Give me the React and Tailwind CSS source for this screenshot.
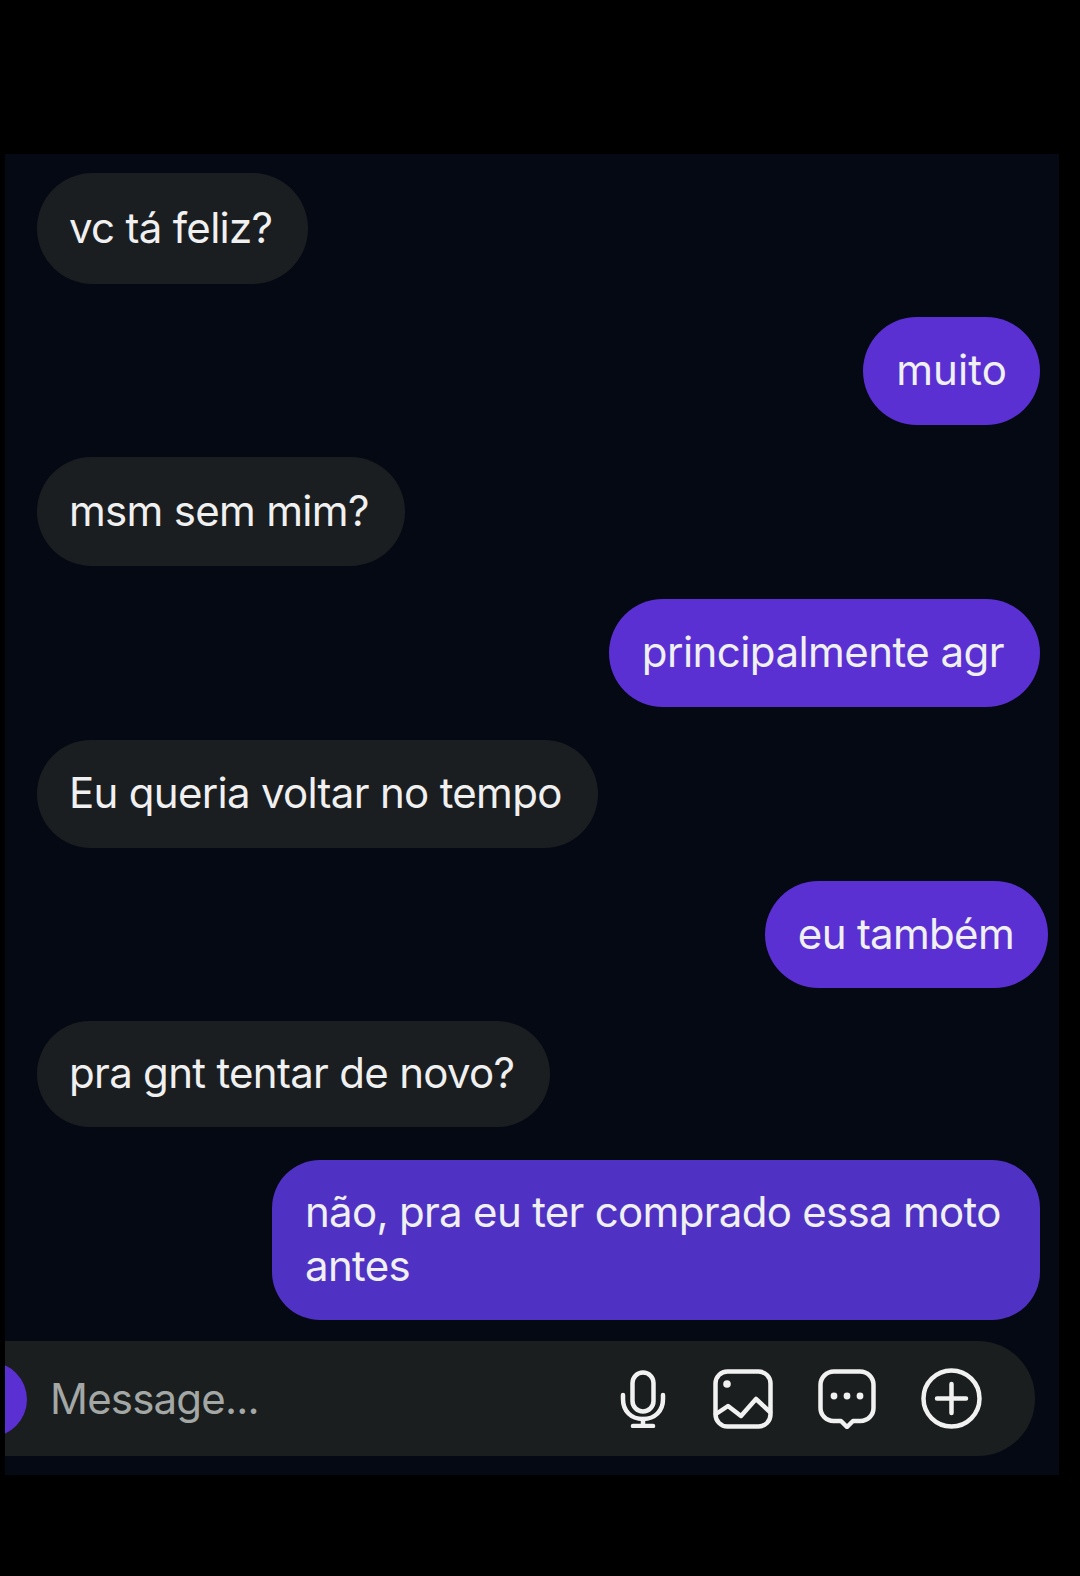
import React from 'react';

const messages = [
  { text: 'vc tá feliz?', mine: false, height: 'h-[111px]', top: 'mt-[19px]' },
  { text: 'muito', mine: true, height: 'h-[108px]', top: 'mt-[33px]', extra: 'tracking-[0.1px]' },
  { text: 'msm sem mim?', mine: false, height: 'h-[109px]', top: 'mt-[32px]' },
  { text: 'principalmente agr', mine: true, height: 'h-[108px]', top: 'mt-[33px]', extra: 'pr-[36px] tracking-[-0.55px]' },
  { text: 'Eu queria voltar no tempo', mine: false, height: 'h-[108px]', top: 'mt-[33px]' },
  { text: 'eu também', mine: true, height: 'h-[107px]', top: 'mt-[33px]', extra: '-mr-[8px] pr-[34px]' },
  { text: 'pra gnt tentar de novo?', mine: false, height: 'h-[106px]', top: 'mt-[33px]' },
];

const MicIcon = () => (
  <svg width="46" height="58" viewBox="0 0 46 58" fill="none" stroke="#f1f1f1" strokeWidth="4.5" strokeLinecap="round" strokeLinejoin="round">
    <rect x="12.5" y="2.5" width="21" height="39" rx="10.5" />
    <path d="M3 25v4c0 12 8 20 20 20s20-8 20-20v-4" />
    <path d="M23 49v7" />
    <path d="M13 56h20" />
  </svg>
);

const ImageIcon = () => (
  <svg width="60" height="60" viewBox="0 0 60 60" fill="none" stroke="#f1f1f1" strokeWidth="4.5" strokeLinecap="round" strokeLinejoin="round">
    <rect x="2.5" y="2.5" width="55" height="55" rx="12" />
    <circle cx="14" cy="15" r="3.8" fill="#f1f1f1" stroke="none" />
    <path d="M3 45l12-8 13 10 15-17 14 13" />
  </svg>
);

const ChatIcon = () => (
  <svg width="58" height="60" viewBox="0 0 58 60" fill="none" stroke="#f1f1f1" strokeWidth="4.5" strokeLinecap="round" strokeLinejoin="round">
    <path d="M16 2.5h26a13.5 13.5 0 0 1 13.5 13.5v23a13 13 0 0 1-13 13h-7.5l-6 6-6-6h-7.5a13 13 0 0 1-13-13V16A13.5 13.5 0 0 1 16 2.5z" />
    <circle cx="16" cy="27" r="3.4" fill="#f1f1f1" stroke="none" />
    <circle cx="29" cy="27" r="3.4" fill="#f1f1f1" stroke="none" />
    <circle cx="42" cy="27" r="3.4" fill="#f1f1f1" stroke="none" />
  </svg>
);

const PlusIcon = () => (
  <svg width="61" height="61" viewBox="0 0 61 61" fill="none" stroke="#f1f1f1" strokeWidth="4.5" strokeLinecap="round">
    <circle cx="30.5" cy="30.5" r="28" />
    <path d="M30.5 16v29M16 30.5h29" />
  </svg>
);

const Bubble = ({ text, mine, height, top, extra = '' }) => (
  <div
    className={`${top} ${height} flex items-center rounded-full pb-[3px] text-[42px] tracking-[-0.7px] text-[#f0f0f0] ${
      mine ? 'self-end bg-[#5a30d2] pl-[33px] pr-[33px]' : 'self-start bg-[#1b1e21] pl-[32px] pr-[36px]'
    } ${extra}`}
  >
    {text}
  </div>
);

export default function App() {
  return (
    <div className="h-[1576px] w-[1080px] overflow-hidden bg-black pt-[154px] pl-[5px] font-['Inter',sans-serif]">
      <div className="flex h-[1321px] w-[1054px] flex-col bg-[#050913] pl-[32px] pr-[19px]">
        {messages.map((m) => (
          <Bubble key={m.text} {...m} />
        ))}
        <div className="mt-[33px] flex h-[160px] w-[768px] items-center self-end rounded-[48px] bg-[#4f32c4] pb-[3px] px-[33px] text-[42px] leading-[54px] tracking-[-0.7px] text-[#f0f0f0]">
          não, pra eu ter comprado essa moto antes
        </div>
        <div className="relative mt-[21px] -ml-[32px] flex h-[115px] w-[1030px] items-center overflow-hidden rounded-r-[57px] bg-[#1a1e1e] pr-[53px] pl-[45px]">
          <div className="absolute top-[21px] -left-[53px] h-[75px] w-[75px] rounded-full bg-[#5a30d2]" />
          <span className="flex-1 text-[42px] tracking-[-0.8px] text-[#a3a7a5]">Message...</span>
          <div className="flex items-center gap-[45px]">
            <div className="mr-[2px] flex">
              <MicIcon />
            </div>
            <ImageIcon />
            <ChatIcon />
            <PlusIcon />
          </div>
        </div>
      </div>
    </div>
  );
}
